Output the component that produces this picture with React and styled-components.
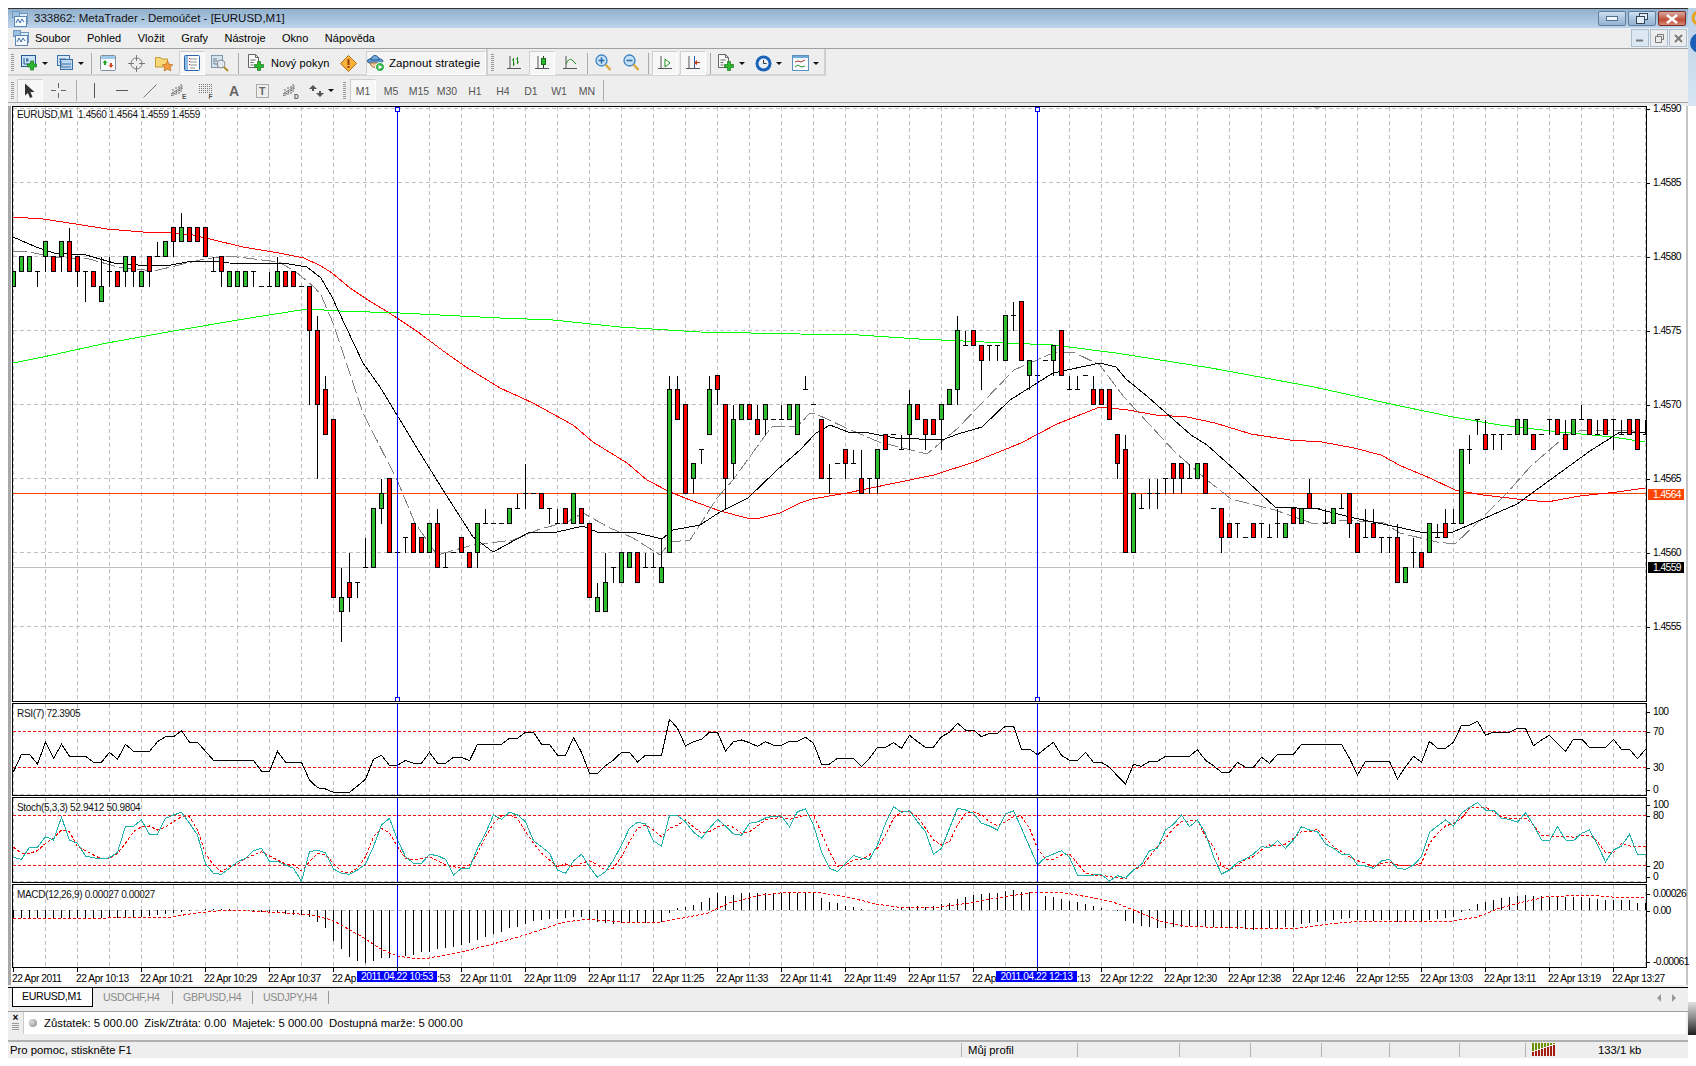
import React from 'react';
import styled, { createGlobalStyle } from 'styled-components';

const Global = createGlobalStyle`
  html, body { margin: 0; padding: 0; background: #fff; }
  body { font-family: "Liberation Sans", Arial, sans-serif; font-size: 11px; color: #000; }
`;

/* ---------- chart data ---------- */
const C = ['g 79 78','g 80 79','g 80 79','d 79 79 78','g 81 80 81 79','r 80 79','g 81 80 81 79','r 81 79 82 79','r 80 79 80 78','d 79 79 77','r 79 78','g 78 77 80 77','d 79 80 78','r 79 78','g 80 79 80 78','r 80 79 80 78','g 79 78','r 80 79 80 78','d 80 81 80','g 81 80','r 82 81 82 80','g 82 81 83 81','r 82 81','r 82 81','r 82 80','d 79 80 79','r 80 79 80 78','g 79 78','g 79 78','g 79 78','d 79 79 78','d 78 78 78','d 78 79 78','g 79 78 80 78','r 79 78','r 79 78','d 78 78 78',
'r 78 75 78 70','r 75 70 76 65','r 71 68 72 68','r 69 57','g 57 56 59 54','r 58 57 60 56','d 58 58 57','d 59 61 59','g 63 59','g 64 63 65 62','r 65 60','d 60 60 59','d 61 61 60','r 62 60','r 61 60','g 62 60','r 62 59 63 59','d 59 60 59','d 60 60 60','r 61 60','r 60 59','g 62 60 62 59','d 62 63 62','d 62 62 62','d 62 62 62','g 63 62','d 63 64 63','d 64 66 63','d 64 64 64','r 64 63','d 63 63 62','d 62 63 62','r 63 62','g 64 62','r 63 62','r 62 57','g 57 56 58 56','g 58 56 60 56','d 59 59 58','g 60 58','g 60 59','r 60 58','d 59 60 59','d 59 60 59','g 59 58 61 58','g 71 60 72 60','r 71 69 72 69','r 70 64','g 66 65 66 64','d 67 67 66','g 71 68 72 68','r 72 71 72 70','r 70 65 70 63','g 69 66 70 65','g 70 69','r 70 69','r 69 68 70 68','g 70 69 70 68','d 69 69 69','d 69 70 69','g 70 69','g 70 68','d 71 72 71','d 70 70 70',
'r 69 65','d 65 66 64','d 66 66 66','r 67 66 67 65','d 66 67 66','r 65 64 67 64','d 65 65 64','g 67 65 67 64','r 68 67','d 68 68 68','d 67 68 67','g 70 68 71 67','r 70 69','r 69 68 69 67','r 69 68','g 70 69 70 67','g 71 70','g 75 71 76 70','d 74 75 74','r 75 74','r 74 73 74 71','d 74 74 73','d 74 74 73','g 76 73','d 76 77 75','r 77 73','g 73 72 73 71','d 72 73 72','d 73 73 73','g 74 73 74 72','r 75 72','d 71 72 71','d 71 72 71','d 72 72 72','r 71 70 72 70','r 71 70','r 71 69','r 68 66 68 65','r 67 60 68 60','g 64 60','d 63 64 63','d 64 65 63','d 64 65 63','d 65 65 64','r 66 65 66 64','r 66 65 66 64','d 65 66 65','g 66 65','r 66 64','d 63 63 63','r 63 61 63 60','r 62 61','d 62 62 61','d 61 61 61','r 62 61','d 62 62 61','d 61 62 61','d 62 63 61','g 62 61','r 63 62','g 63 62','r 64 63 65 63','d 63 63 63','d 62 63 62','g 63 62','d 63 64 63','r 64 62 64 61','r 62 60','d 61 63 61','r 62 61 63 61','d 61 61 60','d 61 61 60','r 61 58 62 58','g 59 58','d 60 61 59','r 60 59','g 62 60','d 61 62 61','r 62 61 63 61','d 62 63 62','g 67 62','d 67 68 66','d 69 69 68','r 68 67 69 67','d 68 68 67','d 68 68 67','d 68 68 68','g 69 68','g 69 68','r 68 67','d 68 68 68','d 69 69 68','r 69 68','r 68 67 69 67','g 69 68','d 69 70 69','r 69 68','d 68 69 68','r 69 68','d 69 69 67','d 68 69 68','r 69 68','r 69 67','d 68 69 68'];

const RED = '13,217 43,219 82,225 107,229 143,232 171,233 193,235 214,240 243,247 279,253 304,258 321,266 332,273 350,288 368,300 386,311 397,318 418,332 446,353 466,367 500,388 533,403 573,425 593,442 627,463 647,480 670,492 690,500 720,511 747,518 760,518 780,513 800,503 812,499 847,493 895,483 934,475 974,462 1021,443 1057,424 1077,416 1100,407 1128,410 1156,415 1187,417 1215,423 1251,434 1290,440 1322,442 1354,448 1381,455 1401,466 1430,478 1455,490 1483,495 1517,499 1547,502 1580,496 1617,492 1645,488';
const GREEN = '13,363 43,357 107,343 179,330 250,318 307,309 340,311 400,313 500,318 553,320 620,327 700,332 800,334 859,335 919,339 1006,343 1053,345 1116,353 1211,368 1314,387 1400,406 1453,417 1500,425 1560,432 1613,437 1645,442';
const BLACK = '13,237 36,247 54,253 86,255 114,263 150,266 171,265 193,261 211,261 229,263 289,264 307,267 321,278 332,297 346,327 363,363 380,387 397,415 420,453 443,490 473,537 493,552 530,532 557,532 583,526 597,532 633,532 662,539 673,530 700,525 720,512 748,498 777,470 800,450 816,433 830,425 848,432 869,433 895,438 942,440 958,434 982,427 1010,400 1053,373 1100,363 1116,367 1126,379 1148,397 1191,435 1207,445 1235,470 1275,507 1318,509 1354,518 1397,527 1420,532 1453,532 1483,519 1517,504 1550,480 1590,451 1620,432 1645,432';
const GREY = '13,251 29,252 54,257 89,259 118,267 154,271 175,266 204,259 229,256 279,262 296,272 314,287 321,295 333,323 363,413 397,480 415,523 437,555 473,545 513,540 540,529 567,522 583,513 610,528 633,538 660,555 670,542 690,540 703,520 717,498 733,480 767,433 773,426 797,427 810,413 816,414 844,427 879,442 927,454 958,428 982,403 1014,370 1053,353 1073,352 1100,365 1124,397 1148,423 1176,453 1207,480 1231,499 1275,510 1314,524 1346,520 1384,523 1400,533 1437,542 1455,544 1477,523 1507,493 1530,467 1547,452 1567,435 1582,430 1627,430 1645,433';
const SIGNAL = '13,918 36,918 107,918 171,917 196,913 229,910 250,911 286,913 311,915 332,920 350,930 364,938 379,948 397,956 411,958 429,958 461,952 493,944 525,935 561,923 586,919 622,922 654,923 683,918 708,913 729,903 761,895 790,892 815,892 847,897 876,904 904,908 940,907 969,903 997,898 1036,892 1065,893 1100,899 1113,902 1136,911 1163,922 1183,926 1206,927 1245,928 1291,929 1330,924 1361,921 1422,921 1453,921 1477,917 1500,908 1523,902 1546,897 1585,895 1612,897 1645,898';

const join = (a, b, c) => [...a.map(y => 690 + y / 3), ...b.map(y => 700 + y / 3), ...c.map(y => 700 + y / 3)];
const RSI = join(
  [245,193,193,222,157,205,163,199,199,199,217,217,187,208,163,184,184,184,155,140,140,122,157,157,184,211,211,211,211,211,211,244,244,184,217,217,217,270,293,297,307,307,307,288,268,208,196,226,226,211,220,220,187,220,220,202,202,212,163,163,163,163,145,145,127,127,163,163,196],
  [166,113,157,220,220,197,180,157,157,186,166,166,166,58,85,138,125,118,97,97,153,125,120,128,139,125,136,136,124,124,112,130,192,192,175,175,175,200,175,142,142,128,145,106,125,142,142,110,97,70,90,90,110,100,100,78,78,147,147,164,145,127,166,181,181,157,187],
  [187,202,228,252,193,199,184,184,169,169,169,169,149,181,197,217,217,187,202,202,172,190,163,163,163,133,133,133,133,133,133,175,225,184,184,184,184,237,200,169,187,124,145,145,127,76,76,64,105,97,97,97,85,85,137,120,106,130,154,117,117,142,142,142,118,148,148,176,148]);
const STOCH_K = join(
  [502,508,472,472,440,450,382,450,460,498,503,507,503,487,409,409,390,433,433,385,375,367,400,435,522,550,553,535,515,505,482,475,514,514,525,535,574,485,481,488,537,550,553,540,522,470,405,385,450,500,520,520,493,497,508,555,535,535,475,430,375,388,367,375,395,452,470,490,540],
  [520,483,463,500,532,515,480,435,385,367,372,423,438,347,347,365,397,415,385,358,378,402,406,370,366,354,348,348,380,335,327,375,455,505,515,490,466,475,478,435,370,320,337,332,365,395,463,445,385,325,330,340,370,378,390,343,332,385,440,495,472,462,452,472,525,525,525],
  [524,543,527,535,510,493,452,445,390,373,345,380,360,400,470,522,510,487,477,462,440,443,422,445,420,380,390,395,432,445,463,463,495,498,505,483,478,505,508,495,470,397,378,360,378,340,322,308,330,330,355,358,367,338,375,420,422,380,420,422,400,390,435,485,450,438,403,463,463]);
const STOCH_D = join(
  [472,490,490,482,460,445,420,425,470,482,495,507,505,490,460,425,410,408,420,412,395,380,380,420,490,525,545,530,522,505,495,485,498,510,522,525,542,515,490,495,520,545,548,535,500,440,415,430,470,505,510,505,500,512,525,530,535,525,490,440,400,378,375,385,425,460,490,510,530],
  [492,500,490,482,495,510,505,470,425,385,375,390,410,385,375,360,380,400,395,380,375,382,400,395,378,360,355,353,358,352,345,345,400,455,500,495,480,478,465,445,405,355,335,333,350,385,420,435,425,375,340,335,345,365,378,365,350,350,385,445,478,478,465,462,490,520,525],
  [525,530,533,537,510,500,470,440,415,385,365,363,360,410,440,497,510,495,478,470,450,435,438,432,415,395,395,388,415,440,455,470,482,490,500,490,487,495,498,497,490,430,400,378,370,355,325,322,322,335,350,355,355,355,375,405,408,408,408,412,405,405,425,458,458,430,438,440,440]);
const MACD = join(
  [685,685,685,685,685,685,685,685,685,685,685,684,683,683,682,681,680,678,676,672,668,665,662,661,658,658,658,658,659,662,665,666,668,670,672,674,675,680,697,713,752,778,800,812,818,812,805,803,800,797,795,787,785,778,775,770,765,760,750,740,733,725,715,712,703,693,690,688,687],
  [653,652,652,660,665,670,672,670,668,668,668,665,665,640,625,620,615,605,595,580,587,585,578,578,580,578,578,578,578,578,578,580,593,605,610,617,622,628,630,630,630,627,623,622,618,620,618,613,608,597,590,584,581,580,578,572,570,575,575,578,587,590,597,603,607,612,617],
  [625,630,634,663,668,677,682,683,683,680,680,678,678,678,680,682,685,687,688,690,688,685,683,680,680,672,670,665,662,660,657,655,660,660,662,660,660,665,662,660,665,660,657,655,652,635,628,612,605,600,593,590,587,585,588,587,590,590,590,590,592,595,598,600,600,600,601,608,610]);

const barX = i => 13.5 + 8 * i;
const priceY = p => Math.floor(404.67 + (70 - p) * 14.8) + 0.5;
const seriesPts = a => a.map((y, i) => `${barX(i)},${y.toFixed(1)}`).join(' ');
const GRID_X = Array.from({ length: 52 }, (_, i) => 13.5 + 32 * i);
const GRID_Y = [108.5, 182.5, 256.5, 330.5, 404.5, 478.5, 552.5, 626.5];
const CURSORS = [397.5, 1037.5];

const TIMES = [['22 Apr 2011'],['22 Apr 10:13'],['22 Apr 10:21'],['22 Apr 10:29'],['22 Apr 10:37'],['22 Ap'],[':53', 41],['22 Apr 11:01'],['22 Apr 11:09'],['22 Apr 11:17'],['22 Apr 11:25'],['22 Apr 11:33'],['22 Apr 11:41'],['22 Apr 11:49'],['22 Apr 11:57'],['22 Ap'],[':13', 41],['22 Apr 12:22'],['22 Apr 12:30'],['22 Apr 12:38'],['22 Apr 12:46'],['22 Apr 12:55'],['22 Apr 13:03'],['22 Apr 13:11'],['22 Apr 13:19'],['22 Apr 13:27']];

/* ---------- layout ---------- */
const Page = styled.div`
  width: 1696px; height: 1066px; box-sizing: border-box; padding: 8px 0 8px 8px;
  display: flex; overflow: hidden; background: #fff;
`;
const Win = styled.div`width: 1680px; flex: none; display: flex; flex-direction: column; background: #eee;`;
const Strip = styled.div`flex: 1; display: flex; flex-direction: column; background: #fff; overflow: hidden;`;
const StripTop = styled.div`height: 96px; background: linear-gradient(#b9d0e6, #d8e6f4); padding-left: 2px; display: flex; flex-direction: column; gap: 5px; padding-top: 2px;`;
const StripBottom = styled.div`height: 33px; margin: auto 0 23px; background: linear-gradient(#e0e0e0, #888 50%, #1c1c1c);`;

const TitleBar = styled.div`
  height: 19px; border-top: 1px solid #333; display: flex; align-items: center; padding-left: 4px;
  background: linear-gradient(#91afcc, #bcd4eb);
`;
const TitleText = styled.span`margin-left: 6px; margin-top: -1px; font-size: 11.5px; color: #111;`;
const WinBtns = styled.div`margin-left: auto; margin-right: 2px; display: flex; gap: 2px;`;
const WinBtn = styled.div`
  width: 28px; height: 15px; border: 1px solid ${p => (p.$close ? '#7a2a22' : '#5e7e9e')}; border-radius: 2px; box-sizing: border-box;
  background: ${p => (p.$close ? 'linear-gradient(#dba99f, #c4604a 50%, #bd4b34 60%, #d98c76)' : 'linear-gradient(#cfe0f0, #a9c4de 50%, #97b6d3)')};
  display: flex; align-items: center; justify-content: center;
`;
const MenuBar = styled.div`height: 20px; display: flex; align-items: center; padding-left: 5px; background: #eee;`;
const MenuItems = styled.div`display: flex; gap: 16.5px; margin-left: 6px; margin-top: -1px; font-size: 11px;`;
const MdiBtns = styled.div`margin-left: auto; margin-right: 1px; display: flex; gap: 1px;`;
const MdiBtn = styled.div`
  width: 18px; height: 18px; box-sizing: border-box; border: 1px solid #a9bed2; display: flex; align-items: center; justify-content: center;
  background: ${p => (p.$blue ? '#dbe8f4' : '#ececec')}; color: #666;
`;
const ToolRow = styled.div`height: ${p => p.$h}px; box-sizing: border-box; border-top: 1px solid ${p => p.$line}; display: flex; align-items: center; background: #eee;`;
const Toolbar = styled.div`
  display: flex; align-items: center; height: 100%; box-sizing: border-box;
  ${p => (p.$bare ? 'padding-top: 2px;' : 'border-right: 2px solid #cfcfcf; border-bottom: 2px solid #d4d4d4; padding-top: 3px;')}
`;
const Grip = styled.div`
  width: ${p => p.$w || 8}px; flex: none; height: 18px; position: relative;
  &::before { content: ''; position: absolute; left: 3px; top: 0; bottom: 0; width: 3px; background: repeating-linear-gradient(#9a9a9a 0 1px, #eee 1px 2px); }
`;
const Btn = styled.div`
  width: 28px; height: 24px; flex: none; box-sizing: border-box; display: flex; align-items: center; justify-content: center;
  color: ${p => p.$color || '#555'}; font-size: 10.5px;
  ${p => p.$on && `background: #f7f7f7 repeating-conic-gradient(#f2f2f2 0 25%, #fcfcfc 0 50%) 0 0/2px 2px; border: 1px solid #cfcfcf; border-bottom-color: #fff; border-right-color: #fff; margin: 0 1px; width: 26px;`}
`;
const DropBtn = styled.div`width: ${p => p.$w || 36}px; flex: none; height: 24px; display: flex; align-items: center; gap: 4px; padding-left: 5px; box-sizing: border-box;`;
const Caret = styled.span`width: 0; height: 0; border: 3px solid transparent; border-top: 3px solid #111; border-bottom: 0; flex: none;`;
const Sep = styled.div`width: ${p => p.$w || 8}px; flex: none; height: 21px; position: relative;
  &::before { content: ''; position: absolute; left: 50%; top: 0; bottom: 0; width: 1px; background: #aaa; }`;
const TextBtn = styled.div`display: flex; align-items: center; gap: ${p => p.$gap || 6}px; width: ${p => p.$w}px; flex: none; box-sizing: border-box; padding-left: ${p => p.$pl}px; height: 24px; font-size: ${p => p.$fs || 11.5}px; letter-spacing: .1px;
  ${p => p.$on && `border: 1px solid #cfcfcf; border-bottom-color: #fff; border-right-color: #fff; background: #f5f5f5; margin-left: 4px;`}`;

const Workspace = styled.div`flex: 1; display: flex; flex-direction: column; border-top: 1px solid #a6a6a6; padding-top: 3px;`;
const ChartFrame = styled.div`height: 879px; flex: none; box-sizing: border-box; border-left: 3px solid #a8a8a8; border-right: 2px solid #c4c4c4; padding-left: 1px; background: #fff; display: flex; flex-direction: column; gap: 1px;`;
const Pane = styled.div`height: ${p => p.$h}px; flex: none; display: flex; position: relative;`;
const Plot = styled.div`width: 1635px; box-sizing: border-box; flex: none; border: 1px solid #000; position: relative; background: #fff;
  svg { display: block; }`;
const PaneLabel = styled.div`position: absolute; left: 4px; top: ${p => p.$top}px; font-size: 10px; letter-spacing: -0.32px; line-height: 12px; white-space: pre; color: #111;`;
const Axis = styled.div`flex: 1; position: relative; font-size: 10.3px; letter-spacing: -0.6px;`;
const AxisLabel = styled.span`
  position: absolute; left: 6px; line-height: 12px; white-space: nowrap;
  &::before { content: ''; position: absolute; left: -6px; top: 6px; width: 3px; height: 1px; background: #000; }
`;
const PriceTag = styled.span`position: absolute; left: 1px; width: 36px; height: 11px; line-height: 11px; box-sizing: border-box; padding-left: 5px; color: #fff; background: ${p => p.$bg};`;

const TimeAxis = styled.div`height: 17px; flex: none; margin-top: -1px; display: flex; position: relative; overflow: hidden; font-size: 10.2px; letter-spacing: -0.42px; line-height: 18px;`;
const TimeLabel = styled.div`flex: 0 0 64px; box-sizing: border-box; white-space: nowrap; position: relative; padding-top: 2px; padding-left: ${p => p.$off || 0}px;
  &::before { content: ''; position: absolute; left: 1px; top: 0; width: 1px; height: 4px; background: #000; }`;
const TimeTag = styled.div`position: absolute; left: ${p => p.$left}px; top: 3px; width: ${p => p.$w}px; height: 11px; line-height: 11px; text-align: center; background: #00f; color: #fff;`;

const Tabs = styled.div`margin-top: 2px; height: 20px; flex: none; box-sizing: border-box; border-top: 1px solid #000; display: flex; padding-left: 4px; align-items: stretch; font-size: 10.6px; letter-spacing: -.32px; line-height: 1; color: #8a8a8a; position: relative;`;
const Tab = styled.div`display: flex; align-items: center; box-sizing: border-box; width: ${p => p.$w}px; padding-left: ${p => p.$pl}px; padding-bottom: 1px;
  ${p => (p.$active ? 'background:#fff;color:#000;border:1px solid #000;border-top:0;' : 'position:relative;&::after{content:"";position:absolute;right:0;top:3px;bottom:3px;width:1px;background:#999;}')}`;
const TabArrows = styled.div`margin-left: auto; margin-right: 12px; display: flex; gap: 11px; align-items: center;`;
const Terminal = styled.div`height: 29px; flex: none; margin-top: 4px; box-sizing: border-box; display: flex; border-top: 1px solid #a0a0a0; position: relative;`;
const TermSide = styled.div`width: 15px; flex: none; display: flex; flex-direction: column; align-items: center; font-size: 10px; font-weight: bold; line-height: 10px; padding-top: 1px;`;
const TermGrip = styled.div`width: 7px; height: 8px; background: repeating-linear-gradient(#999 0 1px, #eee 1px 2px);`;
const TermBody = styled.div`flex: 1; height: 22px; margin-right: 2px; background: #fff; border-left: 1px solid #ccc; display: flex; align-items: center; gap: 6px; padding: 0 0 1px 5px; box-sizing: border-box; font-size: 11.35px; white-space: pre;`;
const Dot = styled.span`width: 8px; height: 8px; border-radius: 50%; background: radial-gradient(circle at 35% 35%, #ddd, #888); flex: none; margin-right: 1px;`;
const StatusBar = styled.div`flex: 1; border-top: 2px solid #b0b0b0; display: flex; font-size: 11.3px; align-items: stretch;`;
const StatusCell = styled.div`width: ${p => p.$w}px; flex: none; box-sizing: border-box; border-right: ${p => (p.$last ? 0 : '1px solid #b4b4b4')}; padding-left: ${p => p.$pl || 6}px; padding-bottom: 1px; display: flex; align-items: center; margin: 1px 0; gap: 43px;`;

const Ic = styled.svg`flex: none; display: block;`;

/* ---------- icons ---------- */
const Plus = ({ x, y, s = 1 }) => (
  <path d={`M${x + 3 * s} ${y}h${3 * s}v${3 * s}h${3 * s}v${3 * s}h${-3 * s}v${3 * s}h${-3 * s}v${-3 * s}h${-3 * s}v${-3 * s}h${3 * s}z`} fill="#2eb82e" stroke="#14761a" strokeWidth=".7" />
);
const AppIcon = () => (
  <Ic width="16" height="16" viewBox="0 0 16 16">
    <rect x="3.5" y="2.5" width="12" height="10" fill="#dcebf8" stroke="#6e97bd" />
    <rect x=".5" y=".5" width="7" height="6" fill="#9cc1e0" stroke="#6e97bd" />
    <rect x="2.5" y="5.5" width="12" height="10" fill="#f4f9fd" stroke="#5d87b0" />
    <path d="M4 12l2-4 2 4 2-4 2 3" fill="none" stroke="#3a6ea5" />
  </Ic>
);
const NewChart = () => (
  <Ic width="17" height="16" viewBox="0 0 17 16">
    <rect x=".5" y=".5" width="14" height="11" fill="#c8e2f6" stroke="#245a92" />
    <path d="M3 3v6h6M6 3v4M5 5h3" stroke="#245a92" fill="none" />
    <Plus x={6.5} y={6} />
  </Ic>
);
const Profiles = () => (
  <Ic width="17" height="16" viewBox="0 0 17 16">
    <rect x=".5" y=".5" width="12" height="10" fill="#d6e8f7" stroke="#3a6ea5" />
    <rect x="3.5" y="4.5" width="12" height="10" fill="#bcd8f0" stroke="#3a6ea5" />
    <path d="M2 4h7M2 7h3M6 9h8M6 12h8M5 8v5" stroke="#3a6ea5" />
  </Ic>
);
const MarketWatch = () => (
  <Ic width="16" height="16" viewBox="0 0 16 16">
    <rect x=".5" y=".5" width="15" height="15" rx="1" fill="#f8fbfd" stroke="#7f8f9c" />
    <rect x="1" y="1" width="14" height="3" fill="#9fc9e8" />
    <path d="M5 5l2.5 3H6v2H4V8H2.5z" fill="#26a526" />
    <path d="M11 13l-2.500-3H10V8h2v2h1.500z" fill="#d9481f" />
  </Ic>
);
const Crosshair = () => (
  <Ic width="17" height="17" viewBox="0 0 17 17">
    <circle cx="8.500" cy="8.500" r="5.500" fill="none" stroke="#777" />
    <path d="M8.500 0v6M8.500 11v6M0 8.500h6M11 8.500h6" stroke="#777" />
  </Ic>
);
const Favorites = () => (
  <Ic width="19" height="17" viewBox="0 0 19 17">
    <path d="M.5 2.500h5l1 1.500h6v8H.5z" fill="#f6d878" stroke="#c49a34" />
    <path d="M12.500 6l1.700 3.300 3.600.5-2.600 2.500.6 3.600-3.300-1.700-3.300 1.700.6-3.600-2.600-2.500 3.600-.5z" fill="#f19a3e" stroke="#b96d1d" strokeWidth=".7" />
  </Ic>
);
const Navigator = () => (
  <Ic width="16" height="16" viewBox="0 0 16 16">
    <rect x=".5" y=".5" width="15" height="15" rx="1" fill="#fff" stroke="#2b66a8" />
    <rect x="1" y="1" width="3" height="14" fill="#8cbce6" />
    <path d="M6 4h7M6 7h7M6 10h7M6 13h5" stroke="#8f8f8f" />
    <path d="M5 3.500h1M5 6.500h1M5 9.500h1" stroke="#d33" />
  </Ic>
);
const MagnifyDoc = () => (
  <Ic width="18" height="18" viewBox="0 0 18 18">
    <rect x=".5" y="1.500" width="11" height="12" fill="#d7e4ee" stroke="#7f97ab" />
    <path d="M3 4v6h6M5 4v4" stroke="#67829a" fill="none" />
    <circle cx="10" cy="10" r="4" fill="#e8f1f8" fillOpacity=".7" stroke="#8b8b8b" />
    <path d="M13 13l4 4" stroke="#b58b2f" strokeWidth="2" />
  </Ic>
);
const OrderDoc = () => (
  <Ic width="17" height="18" viewBox="0 0 17 18">
    <path d="M.5.500h7l3 3v10H.5z" fill="#fafafa" stroke="#666" />
    <path d="M7.500.500v3h3M2.500 6h5M2.500 8.500h3M2.500 11h3" fill="none" stroke="#666" />
    <Plus x={6.500} y={7.500} />
  </Ic>
);
const Warn = () => (
  <Ic width="17" height="17" viewBox="0 0 17 17">
    <path d="M8.500.5l8 8-8 8-8-8z" fill="#f7b23b" stroke="#b86d12" />
    <rect x="7.500" y="4" width="2" height="6" fill="#a33a0a" />
    <rect x="7.500" y="11" width="2" height="2" fill="#a33a0a" />
  </Ic>
);
const Strategy = () => (
  <Ic width="18" height="18" viewBox="0 0 18 18">
    <ellipse cx="8" cy="7" rx="8" ry="2.800" fill="#5c95c9" stroke="#2d5f90" />
    <path d="M4 6c0-6 8-6 8 0z" fill="#6ea8dc" stroke="#2d5f90" />
    <path d="M3 9c1 6 9 6 10 0z" fill="#f3c79a" stroke="#a97943" />
    <circle cx="13" cy="13" r="4.500" fill="#36b34a" stroke="#fff" />
    <path d="M11.500 10.800l4 2.200-4 2.200z" fill="#fff" />
  </Ic>
);
const AxisBase = () => <path d="M4 1v13M1 13.500h14" stroke="#555" fill="none" />;
const BarsIc = () => (
  <Ic width="16" height="16" viewBox="0 0 16 16"><AxisBase /><path d="M7.500 3v8M6 5h1.500M7.500 9H9M11.500 2v7M10 4h1.500M11.500 7H13" stroke="#1c8d1c" fill="none" /></Ic>
);
const CandleIc = () => (
  <Ic width="16" height="16" viewBox="0 0 16 16"><AxisBase /><path d="M9.500 1v12" stroke="#333" /><rect x="7.500" y="3.500" width="4" height="6" fill="#2eb82e" stroke="#156f15" /></Ic>
);
const LineIc = () => (
  <Ic width="16" height="16" viewBox="0 0 16 16"><AxisBase /><path d="M4 9c2-5 5-6 7-3l3 3" stroke="#1c8d1c" fill="none" /></Ic>
);
const Zoom = ({ plus }) => (
  <Ic width="17" height="18" viewBox="0 0 17 18">
    <circle cx="6.500" cy="6.500" r="5.500" fill="#c7e1f6" stroke="#3c84c6" strokeWidth="1.300" />
    <path d={plus ? 'M3.500 6.500h6M6.500 3.500v6' : 'M3.500 6.500h6'} stroke="#2b6da8" strokeWidth="1.600" />
    <path d="M10.500 10.500l5 5.500" stroke="#d9a93a" strokeWidth="2.400" />
  </Ic>
);
const AutoIc = () => (
  <Ic width="16" height="16" viewBox="0 0 16 16"><AxisBase /><path d="M8 4l5 4-5 4z" fill="#fff" stroke="#1e8f1e" /></Ic>
);
const ShiftIc = () => (
  <Ic width="16" height="16" viewBox="0 0 16 16"><AxisBase /><path d="M9.500 1v12" stroke="#2a5fa8" /><path d="M15 7h-3V5l-3 3 3 2V8h3z" fill="#c93a12" /></Ic>
);
const ClockIc = () => (
  <Ic width="17" height="17" viewBox="0 0 17 17">
    <circle cx="8.500" cy="8.500" r="8" fill="#1b63b8" />
    <circle cx="8.500" cy="8.500" r="5" fill="#eaf0f6" />
    <path d="M8.500 5v3.500h3" stroke="#333" fill="none" />
  </Ic>
);
const TemplateIc = () => (
  <Ic width="17" height="16" viewBox="0 0 17 16">
    <rect x=".5" y=".5" width="16" height="15" fill="#f8fbfd" stroke="#5d90c2" />
    <rect x="1" y="1" width="15" height="2" fill="#6ea8dc" />
    <path d="M3 7l3-1 3 1 4-2" stroke="#a33" fill="none" />
    <path d="M3 12l3-2 3 2 4-1" stroke="#2a8f2a" fill="none" />
  </Ic>
);
const Cursor = () => (
  <Ic width="12" height="16" viewBox="0 0 12 16"><path d="M1 .5v12l3-2.500 2 5 2.500-1-2-5h4z" fill="#333" /></Ic>
);
const ThinCross = () => (
  <Ic width="15" height="15" viewBox="0 0 15 15"><path d="M7.500 0v5M7.500 10v5M0 7.500h5M10 7.500h5" stroke="#666" /></Ic>
);
const VLine = () => <Ic width="3" height="15" viewBox="0 0 3 15"><path d="M1.500 0v15" stroke="#555" /></Ic>;
const HLine = () => <Ic width="12" height="3" viewBox="0 0 12 3"><path d="M0 1.500h12" stroke="#555" /></Ic>;
const TLine = () => <Ic width="14" height="14" viewBox="0 0 14 14"><path d="M.5 13.500l13-13" stroke="#777" /></Ic>;
const Channel = ({ l }) => (
  <Ic width="17" height="16" viewBox="0 0 17 16">
    <path d="M1 11l12-8M1 13l12-8M3 6v7M6 4v8M9 3v8M11 1v9" stroke="#666" fill="none" strokeDasharray="2 1" />
    <text x="12" y="15.500" fontSize="6.500" fontWeight="bold" fontFamily="Liberation Sans" fill="#555">{l}</text>
  </Ic>
);
const Fibo = () => (
  <Ic width="16" height="16" viewBox="0 0 16 16">
    <path d="M1 1.500h13M1 3.500h13M1 5.500h13M1 7.500h13M1 9.500h13" stroke="#777" strokeDasharray="1 1" />
    <text x="10.500" y="15.500" fontSize="6.500" fontWeight="bold" fontFamily="Liberation Sans" fill="#555">F</text>
  </Ic>
);
const TBox = () => (
  <Ic width="13" height="14" viewBox="0 0 13 14">
    <rect x=".5" y=".5" width="12" height="13" fill="none" stroke="#666" strokeDasharray="1 1" />
    <text x="3" y="11" fontSize="10.500" fontFamily="Liberation Sans" fontWeight="bold" fill="#666">T</text>
  </Ic>
);
const Arrows = () => (
  <Ic width="15" height="14" viewBox="0 0 15 14"><path d="M4 1l4 4H5v2H3V5H0zM11 13l-4-4h3V7h2v2h3z" fill="#555" /></Ic>
);
const Traffic = () => (
  <Ic width="23" height="13" viewBox="0 0 23 13">
    {Array.from({ length: 8 }, (_, i) => (
      <g key={i}>
        <rect x={i * 3} y="0" width="2" height={8 - i} fill="#6d8f00" />
        <rect x={i * 3} y={Math.max(9 - i, 2)} width="2" height={13 - Math.max(9 - i, 2)} fill="#a51d0e" />
      </g>
    ))}
  </Ic>
);

/* ---------- chart parts ---------- */
const Grid = ({ top, bottom, ys = [] }) => (
  <g stroke="#c0c0c0" strokeDasharray="4 3" shapeRendering="crispEdges">
    {GRID_X.map(x => <line key={x} x1={x} x2={x} y1={top} y2={bottom} />)}
    {ys.map(y => <line key={y} x1="13" x2="1646" y1={y} y2={y} />)}
  </g>
);
const Cursors = ({ top, bottom }) => (
  <g stroke="#0000ff" shapeRendering="crispEdges">
    {CURSORS.map(x => <line key={x} x1={x} x2={x} y1={top} y2={bottom} />)}
  </g>
);
const Level = ({ y }) => <line x1="13" x2="1646" y1={y} y2={y} stroke="#ee1111" strokeDasharray="3 2" shapeRendering="crispEdges" />;
const Line = ({ pts, color, dash }) => <polyline points={pts} fill="none" stroke={color} strokeDasharray={dash} shapeRendering="crispEdges" />;

const Candle = ({ spec, i }) => {
  const [t, ...n] = spec.split(' ');
  const [a, b, c, d] = n.map(Number);
  const x = barX(i);
  if (t === 'd') {
    return (
      <g stroke="#000" shapeRendering="crispEdges">
        <line x1={x} x2={x} y1={priceY(b)} y2={priceY(c)} />
        <line x1={x - 2.5} x2={x + 2.5} y1={priceY(a)} y2={priceY(a)} />
      </g>
    );
  }
  const hi = c === undefined ? a : c;
  const lo = d === undefined ? b : d;
  return (
    <g stroke="#000" shapeRendering="crispEdges">
      <line x1={x} x2={x} y1={priceY(hi)} y2={priceY(lo)} />
      <rect x={x - 2} y={priceY(a)} width="4" height={priceY(b) - priceY(a)} fill={t === 'g' ? '#2fbe2f' : '#ff0000'} />
    </g>
  );
};

const MainSvg = () => (
  <svg width="1633" height="594" viewBox="13 107 1633 594">
    <Grid top={107} bottom={701} ys={GRID_Y} />
    <line x1="13" x2="1646" y1="493.500" y2="493.500" stroke="#ff4500" shapeRendering="crispEdges" />
    <line x1="13" x2="1646" y1="567.500" y2="567.500" stroke="#c0c0c0" shapeRendering="crispEdges" />
    <Line pts={RED} color="#f00" />
    <Line pts={GREEN} color="#0f0" />
    <Line pts={GREY} color="#808080" dash="14 4" />
    <Line pts={BLACK} color="#000" />
    {C.map((s, i) => <Candle key={i} spec={s} i={i} />)}
    <Cursors top={107} bottom={701} />
    {CURSORS.map(x => (
      <g key={x} fill="#fff" stroke="#0000ff" shapeRendering="crispEdges">
        <rect x={x - 2} y="107.500" width="4" height="4" />
        <rect x={x - 2} y="697.500" width="4" height="4" />
      </g>
    ))}
    <path d="M1313 107h8l-4 3z" fill="#bbb" />
  </svg>
);
const RsiSvg = () => (
  <svg width="1633" height="91" viewBox="13 704 1633 91">
    <Grid top={704} bottom={795} ys={[794.5]} />
    <Level y={731.500} />
    <Level y={767.500} />
    <polyline points={seriesPts(RSI)} fill="none" stroke="#000" shapeRendering="crispEdges" />
    <Cursors top={704} bottom={795} />
  </svg>
);
const StochSvg = () => (
  <svg width="1633" height="84" viewBox="13 798 1633 84">
    <Grid top={798} bottom={882} ys={[881.5]} />
    <Level y={815.500} />
    <Level y={865.500} />
    <polyline points={seriesPts(STOCH_D)} fill="none" stroke="#f00" strokeDasharray="3 2" shapeRendering="crispEdges" />
    <polyline points={seriesPts(STOCH_K)} fill="none" stroke="#20b2aa" shapeRendering="crispEdges" />
    <Cursors top={798} bottom={882} />
  </svg>
);
const MacdSvg = () => (
  <svg width="1633" height="82" viewBox="13 885 1633 82">
    <Grid top={885} bottom={967} ys={[910.5]} />
    <g stroke="#000" shapeRendering="crispEdges">
      {MACD.map((y, i) => <line key={i} x1={barX(i)} x2={barX(i)} y1="910" y2={y} />)}
    </g>
    <Line pts={SIGNAL} color="#f00" dash="3 2" />
    <Cursors top={885} bottom={967} />
  </svg>
);

const AL = ({ y, children }) => <AxisLabel style={{ top: y }}>{children}</AxisLabel>;

export default function App() {
  return (
    <>
      <Global />
      <Page>
        <Win>
          <TitleBar>
            <AppIcon />
            <TitleText>333862: MetaTrader - Demoúčet - [EURUSD,M1]</TitleText>
            <WinBtns>
              <WinBtn><Ic width="12" height="6" viewBox="0 0 12 6"><rect x=".5" y=".5" width="11" height="4" fill="#f2f6fa" stroke="#55708a" /></Ic></WinBtn>
              <WinBtn><Ic width="12" height="11" viewBox="0 0 12 11"><rect x="3.500" y=".5" width="8" height="6" fill="#e4edf5" stroke="#33465a" /><rect x=".5" y="3.500" width="8" height="7" fill="#e4edf5" stroke="#33465a" /></Ic></WinBtn>
              <WinBtn $close><Ic width="12" height="10" viewBox="0 0 12 10"><path d="M1 1l10 8M11 1L1 9" stroke="#fff" strokeWidth="2.600" /></Ic></WinBtn>
            </WinBtns>
          </TitleBar>
          <MenuBar>
            <AppIcon />
            <MenuItems>
              <span>Soubor</span><span>Pohled</span><span>Vložit</span><span>Grafy</span><span>Nástroje</span><span>Okno</span><span>Nápověda</span>
            </MenuItems>
            <MdiBtns>
              <MdiBtn $blue><Ic width="8" height="8" viewBox="0 0 8 8"><path d="M0 6.500h7" stroke="#777" strokeWidth="2" /></Ic></MdiBtn>
              <MdiBtn><Ic width="9" height="9" viewBox="0 0 9 9"><path d="M2.500 2.500v-2h6v5h-2M.5 2.500h6v6h-6z" fill="none" stroke="#777" /></Ic></MdiBtn>
              <MdiBtn><Ic width="9" height="9" viewBox="0 0 9 9"><path d="M1 1l7 7M8 1L1 8" stroke="#777" strokeWidth="1.800" /></Ic></MdiBtn>
            </MdiBtns>
          </MenuBar>
          <ToolRow $h={28} $line="#a0a0a0">
            <Toolbar>
              <Grip />
              <DropBtn><NewChart /><Caret /></DropBtn>
              <DropBtn><Profiles /><Caret /></DropBtn>
              <Sep $w={6} />
              <Btn><MarketWatch /></Btn>
              <Btn><Crosshair /></Btn>
              <Btn><Favorites /></Btn>
              <Btn $on><Navigator /></Btn>
              <Btn><MagnifyDoc /></Btn>
              <Sep />
              <TextBtn $w={92} $pl={6} $fs={11}><OrderDoc /><span>Nový pokyn</span></TextBtn>
              <Btn><Warn /></Btn>
              <TextBtn $on $w={120} $pl={0} $gap={4}><Strategy /><span>Zapnout strategie</span></TextBtn>
            </Toolbar>
            <Toolbar>
              <Grip $w={12} />
              <Btn><BarsIc /></Btn>
              <Btn $on><CandleIc /></Btn>
              <Btn><LineIc /></Btn>
              <Sep $w={5} />
              <Btn><Zoom plus /></Btn>
              <Btn><Zoom /></Btn>
              <Sep $w={6} />
              <Btn $on><AutoIc /></Btn>
              <Btn $on><ShiftIc /></Btn>
              <Sep $w={6} />
              <DropBtn $w={37}><OrderDoc /><Caret /></DropBtn>
              <DropBtn $w={37}><ClockIc /><Caret /></DropBtn>
              <DropBtn $w={37}><TemplateIc /><Caret /></DropBtn>
            </Toolbar>
          </ToolRow>
          <ToolRow $h={26} $line="#eee">
            <Toolbar $bare>
              <Grip />
              <Btn $on><Cursor /></Btn>
              <Btn><ThinCross /></Btn>
              <Sep />
              <Btn><VLine /></Btn>
              <Btn><HLine /></Btn>
              <Btn><TLine /></Btn>
              <Btn><Channel l="E" /></Btn>
              <Btn><Fibo /></Btn>
              <Btn $color="#666"><b style={{ fontSize: 14 }}>A</b></Btn>
              <Btn><TBox /></Btn>
              <Btn><Channel l="D" /></Btn>
              <DropBtn $w={36}><Arrows /><Caret /></DropBtn>
            </Toolbar>
            <Toolbar $bare>
              <Grip $w={9} />
              <Btn $on>M1</Btn><Btn>M5</Btn><Btn>M15</Btn><Btn>M30</Btn><Btn>H1</Btn><Btn>H4</Btn><Btn>D1</Btn><Btn>W1</Btn><Btn>MN</Btn>
              <Sep $w={3} />
            </Toolbar>
          </ToolRow>
          <Workspace>
            <ChartFrame>
              <Pane $h={596}>
                <Plot>
                  <MainSvg />
                  <PaneLabel $top={2}>EURUSD,M1  1.4560 1.4564 1.4559 1.4559</PaneLabel>
                </Plot>
                <Axis>
                  {['1.4590', '1.4585', '1.4580', '1.4575', '1.4570', '1.4565', '1.4560', '1.4555'].map((t, i) => (
                    <AL key={t} y={GRID_Y[i] - 106 - 5.5}>{t}</AL>
                  ))}
                  <PriceTag style={{ top: 383 }} $bg="#ff4500">1.4564</PriceTag>
                  <PriceTag style={{ top: 456 }} $bg="#000">1.4559</PriceTag>
                </Axis>
              </Pane>
              <Pane $h={93}>
                <Plot><RsiSvg /><PaneLabel $top={4}>RSI(7) 72.3905</PaneLabel></Plot>
                <Axis><AL y={3}>100</AL><AL y={23}>70</AL><AL y={59}>30</AL><AL y={81}>0</AL></Axis>
              </Pane>
              <Pane $h={86}>
                <Plot><StochSvg /><PaneLabel $top={4}>Stoch(5,3,3) 52.9412 50.9804</PaneLabel></Plot>
                <Axis><AL y={2}>100</AL><AL y={13}>80</AL><AL y={63}>20</AL><AL y={74}>0</AL></Axis>
              </Pane>
              <Pane $h={84}>
                <Plot><MacdSvg /><PaneLabel $top={4}>MACD(12,26,9) 0.00027 0.00027</PaneLabel></Plot>
                <Axis><AL y={4}>0.00026</AL><AL y={21}>0.00</AL><AL y={72}>-0.00061</AL></Axis>
              </Pane>
              <TimeAxis>
                {TIMES.map(([t, off], i) => <TimeLabel key={i} $off={off}>{t}</TimeLabel>)}
                <TimeTag $left={345} $w={80}>2011.04.22 10:53</TimeTag>
                <TimeTag $left={984} $w={81}>2011.04.22 12:13</TimeTag>
              </TimeAxis>
            </ChartFrame>
            <Tabs>
              <Tab $active $w={81} $pl={9}>EURUSD,M1</Tab>
              <Tab $w={80} $pl={10}>USDCHF,H4</Tab>
              <Tab $w={80} $pl={10}>GBPUSD,H4</Tab>
              <Tab $w={76} $pl={10}>USDJPY,H4</Tab>
              <TabArrows>
                <Ic width="4" height="8" viewBox="0 0 4 8"><path d="M4 0v8L0 4z" fill="#999" /></Ic>
                <Ic width="4" height="8" viewBox="0 0 4 8"><path d="M0 0v8l4-4z" fill="#999" /></Ic>
              </TabArrows>
            </Tabs>
            <Terminal>
              <TermSide>×<TermGrip /></TermSide>
              <TermBody><Dot /><span>Zůstatek: 5 000.00  Zisk/Ztráta: 0.00  Majetek: 5 000.00  Dostupná marže: 5 000.00</span></TermBody>
            </Terminal>
            <StatusBar>
              <StatusCell $w={954} $pl={2}>Pro pomoc, stiskněte F1</StatusCell>
              <StatusCell $w={116}>Můj profil</StatusCell>
              <StatusCell $w={102} />
              <StatusCell $w={71} />
              <StatusCell $w={71} />
              <StatusCell $w={68} />
              <StatusCell $w={70} />
              <StatusCell $w={66} />
              <StatusCell $last $w={150}><Traffic /><span>133/1 kb</span></StatusCell>
            </StatusBar>
          </Workspace>
        </Win>
        <Strip>
          <StripTop>
            <Ic width="10" height="16" viewBox="0 0 10 16"><circle cx="9" cy="8" r="6" fill="none" stroke="#e8a21c" strokeWidth="3" /></Ic>
            <Ic width="10" height="24" viewBox="0 0 10 24"><circle cx="10" cy="12" r="10" fill="#1a5fb4" /></Ic>
          </StripTop>
          <StripBottom />
        </Strip>
      </Page>
    </>
  );
}
